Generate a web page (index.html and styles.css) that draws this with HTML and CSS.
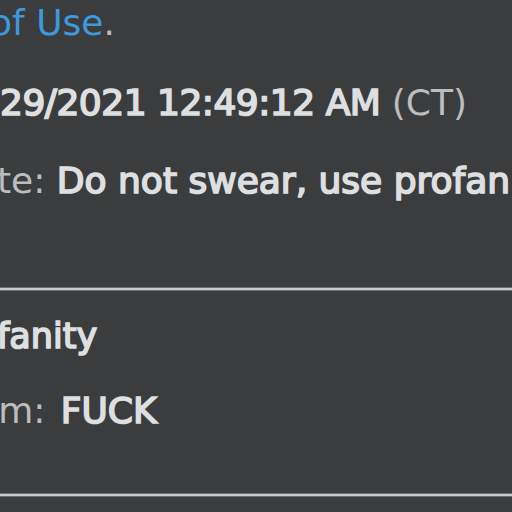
FILE: index.html
```html
<!DOCTYPE html>
<html lang="en">
<head>
    <meta charset="UTF-8">
    <meta name="viewport" content="width=device-width, initial-scale=1.0">
    <title>Account Moderation</title>
    <link rel="stylesheet" href="styles.css">
</head>
<body>
    <div class="notice">
        <p class="line terms"><a href="#">of Use</a>.</p>
        <p class="line reviewed"><strong>29/2021 12:49:12 AM</strong> (CT)</p>
        <p class="line note">te: <strong>Do not swear, use profanity or otherwise say inappropriate things.</strong></p>
        <div class="rule"></div>
        <p class="line reason"><strong>fanity</strong></p>
        <p class="line item">em: <strong>FUCK</strong></p>
        <div class="rule"></div>
    </div>
</body>
</html>
```

FILE: styles.css
```css
body {
    margin: 0;
    background-color: #3b3c3e;
    font-family: "DejaVu Sans", sans-serif;
    overflow: hidden;
}
.notice {
    width: 512px;
    overflow: hidden;
    padding-top: 3px;
}
.line {
    margin: 0;
    font-size: 36px;
    line-height: 40px;
    color: #bcbdbe;
    white-space: nowrap;
}
.line strong {
    color: #dedfe0;
    font-weight: normal;
    -webkit-text-stroke: 1.7px #dedfe0;
}
.terms a {
    color: #3d98dc;
    text-decoration: none;
}
.terms {
    margin-left: -10px;
}
.reviewed {
    margin-top: 40px;
}
.reviewed strong {
    letter-spacing: -0.5px;
}
.note {
    margin-top: 38px;
    margin-left: -3px;
}
.reason {
    margin-top: 25px;
    margin-left: -3px;
    font-size: 35px;
}
.item {
    margin-top: 35px;
    margin-left: -24px;
}
.item strong {
    margin-left: 4px;
}
.rule {
    height: 2px;
    background-color: #c8c9ca;
    border-top: 1px solid #6c6d6f;
    border-bottom: 1px solid #6c6d6f;
}
.note + .rule {
    margin-top: 86px;
}
.item + .rule {
    margin-top: 62px;
}
```
